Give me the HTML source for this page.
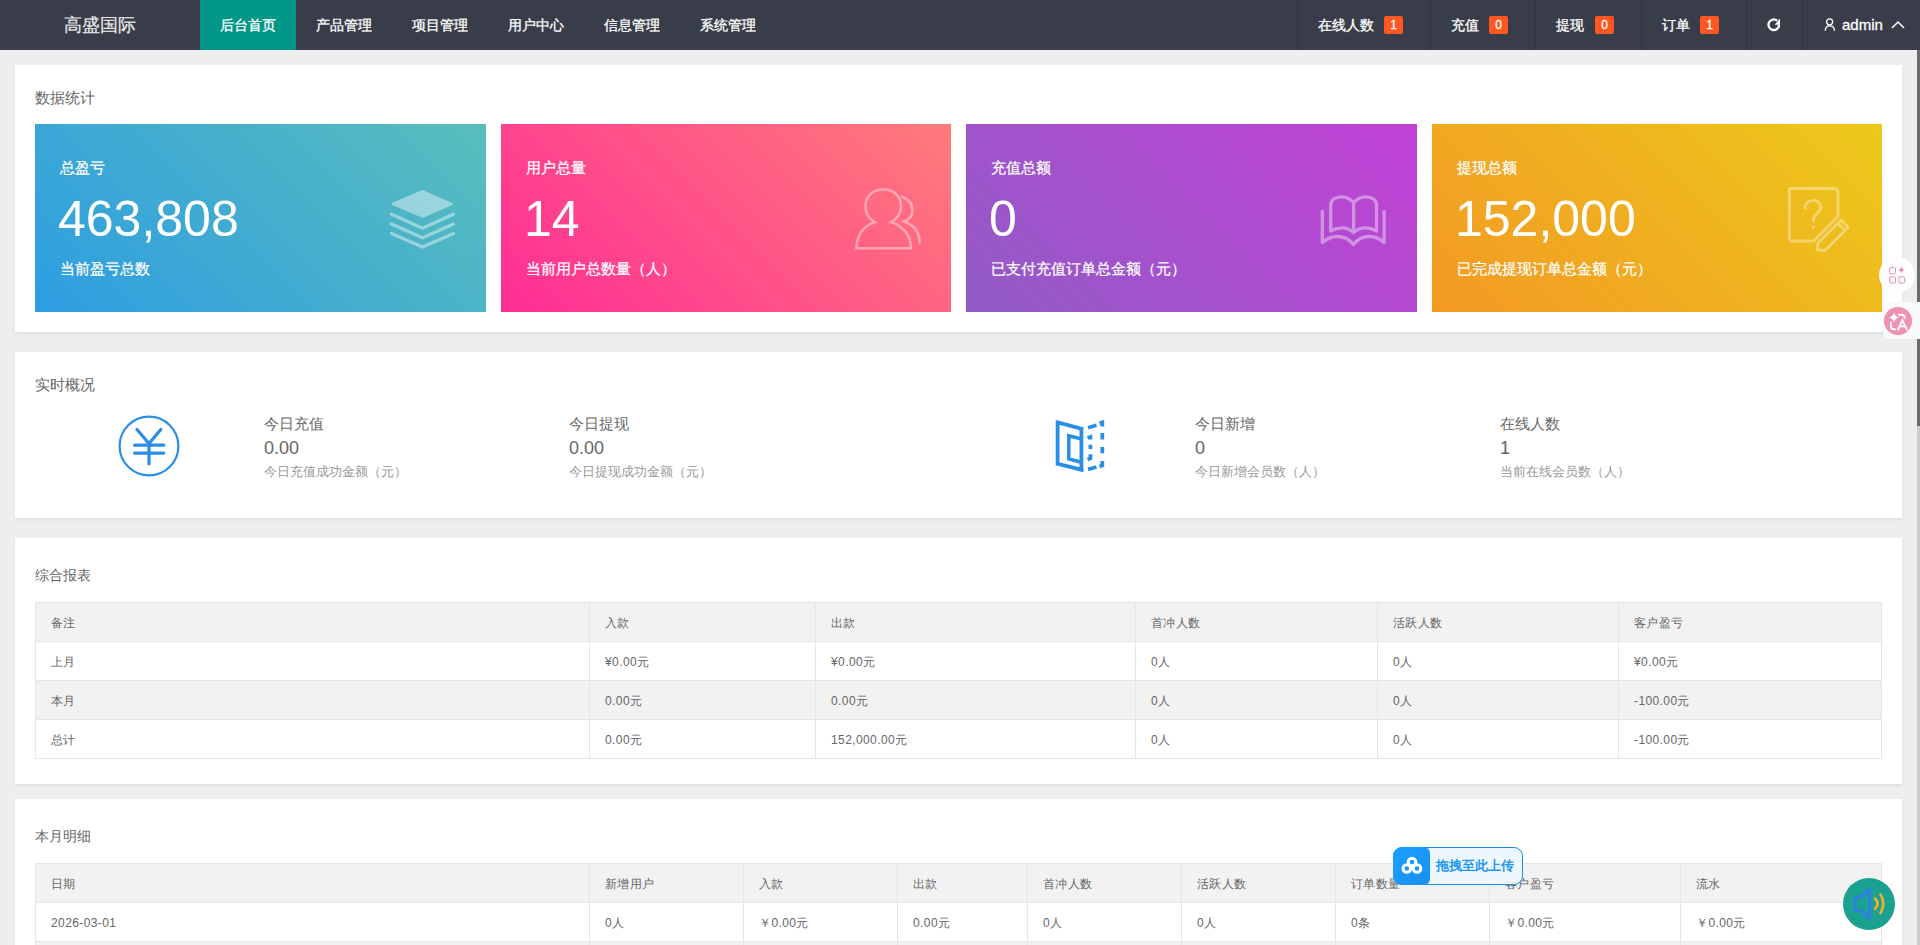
<!DOCTYPE html>
<html><head><meta charset="utf-8">
<style>
*{box-sizing:border-box;margin:0;padding:0}
html,body{width:1920px;height:945px;overflow:hidden}
body{background:#eeeeee;font-family:"Liberation Sans",sans-serif;color:#666;position:relative}
.hdr{position:absolute;left:0;top:0;width:1920px;height:50px;background:#393d49}
.logo{position:absolute;left:0;top:0;width:200px;height:50px;line-height:50px;text-align:center;color:#eaeaea;font-size:18px;-webkit-text-stroke:0.2px #eaeaea}
.nav{position:absolute;top:0;height:50px;line-height:50px;font-size:14px;color:#fff;text-align:center;-webkit-text-stroke:0.3px #fff}
.nav.on{background:#009688;color:#fff}
.sep{position:absolute;top:0;width:1px;height:50px;background:#33363f}
.rt{position:absolute;top:0;height:50px;line-height:50px;font-size:14px;color:#fff;-webkit-text-stroke:0.3px #fff}
.badge{position:absolute;top:16px;width:19px;height:18px;line-height:19px;text-align:center;background:#ff5722;color:#fff;font-size:12px;border-radius:2px;-webkit-text-stroke:0.3px #fff}
.card{position:absolute;left:15px;width:1887px;background:#fff;box-shadow:0 2px 3px 0 rgba(0,0,0,.06)}
.ctitle{position:absolute;left:20px;font-size:15px;color:#666;height:20px;line-height:20px}
.box{position:absolute;top:59px;height:188px;color:#fff}
.box .t{position:absolute;left:25px;top:34px;font-size:15px;line-height:20px;-webkit-text-stroke:0.25px #fff}
.box .n{position:absolute;left:23px;top:70px;font-size:50px;line-height:50px}
.box .s{position:absolute;left:25px;top:135px;font-size:15px;line-height:20px;-webkit-text-stroke:0.25px #fff}
.box svg{position:absolute}
.it{position:absolute}
.it .a{font-size:15px;line-height:20px;color:#666;position:relative;top:1px}
.it .b{font-size:18px;line-height:24px;color:#666;position:relative;top:3px}
.it .c{font-size:13px;line-height:24px;color:#999;position:relative;top:3px}
table{position:absolute;left:20px;border-collapse:collapse;table-layout:fixed;font-size:12px;color:#666}
td,th{border:1px solid #e6e6e6;height:39px;padding:2px 15px 0;letter-spacing:0.4px;text-align:left;font-weight:normal;white-space:nowrap;overflow:hidden}
tr.g td,tr.g th{background:#f2f2f2}
.sb{position:absolute;left:1917px;top:50px;width:3px;height:895px;background:#cdcdcd}
.sbt{position:absolute;left:1917px;top:50px;width:3px;height:376px;background:#6b6b6b}
</style></head><body>
<div class="hdr">
  <div class="logo">高盛国际</div>
  <div class="nav on" style="left:200px;width:96px">后台首页</div>
  <div class="nav" style="left:296px;width:96px">产品管理</div>
  <div class="nav" style="left:392px;width:96px">项目管理</div>
  <div class="nav" style="left:488px;width:96px">用户中心</div>
  <div class="nav" style="left:584px;width:96px">信息管理</div>
  <div class="nav" style="left:680px;width:96px">系统管理</div>

  <div class="sep" style="left:1297px"></div>
  <div class="sep" style="left:1430px"></div>
  <div class="sep" style="left:1535px"></div>
  <div class="sep" style="left:1641px"></div>
  <div class="sep" style="left:1746px"></div>
  <div class="sep" style="left:1802px"></div>
  <div class="rt" style="left:1318px">在线人数</div><div class="badge" style="left:1384px">1</div>
  <div class="rt" style="left:1451px">充值</div><div class="badge" style="left:1489px">0</div>
  <div class="rt" style="left:1556px">提现</div><div class="badge" style="left:1595px">0</div>
  <div class="rt" style="left:1662px">订单</div><div class="badge" style="left:1700px">1</div>
  <svg style="position:absolute;left:1766px;top:16px" width="16" height="16" viewBox="0 0 16 16"><path d="M11.2 4.64A5.3 5.3 0 1 0 13.1 8.9" fill="none" stroke="#fff" stroke-width="2.3"/><path d="M14 2.4L14 8.8L8.7 8.8Z" fill="#fff"/></svg>
  <svg style="position:absolute;left:1823px;top:17px" width="14" height="15" viewBox="0 0 14 15"><circle cx="6.6" cy="4.8" r="3" fill="none" stroke="#fff" stroke-width="1.3"/><path d="M2.3 13.8C2.3 10.6 4.2 8.9 6.7 8.9C9.2 8.9 11.4 10.6 11.4 13.8" fill="none" stroke="#fff" stroke-width="1.3"/></svg>
  <div class="rt" style="left:1842px;font-size:15px">admin</div>
  <svg style="position:absolute;left:1891px;top:20px" width="14" height="10" viewBox="0 0 14 10"><path d="M1 8L7 2L13 8" fill="none" stroke="#fff" stroke-width="1.5"/></svg>
</div>

<!-- card 1 -->
<div class="card" style="top:65px;height:267px">
  <div class="ctitle" style="top:23px">数据统计</div>
  <div class="box" style="left:20px;width:451px;background:linear-gradient(45deg,#2e9de2,#58bebb)">
    <div class="t">总盈亏</div><div class="n">463,808</div><div class="s">当前盈亏总数</div>
    <svg style="left:350px;top:61px;opacity:.42" width="75" height="70" viewBox="385 185 75 70" fill="none" stroke="#fff" stroke-width="3.4" stroke-linecap="round" stroke-linejoin="round">
      <path d="M393.5 203.8L422.8 191.5L451.2 204L422.8 216.4Z" fill="#fff" stroke-width="3"/>
      <path d="M391.5 214.3L422.5 228.3L453.5 214.3M391.5 224L422.5 237.8L453.5 224M391.5 233.5L422.5 247L453.5 233.5"/>
    </svg>
  </div>
  <div class="box" style="left:486px;width:450px;background:linear-gradient(45deg,#ff2d95,#ff7c7b)">
    <div class="t">用户总量</div><div class="n">14</div><div class="s">当前用户总数量（人）</div>
    <svg style="left:349px;top:60px;opacity:.4" width="80" height="75" viewBox="850 184 80 75" fill="none" stroke="#fff" stroke-width="2.6" stroke-linecap="round" stroke-linejoin="miter">
      <path d="M875 222.3C868 218.5 865.5 212 865.5 206C865.5 196 873 189.5 883.3 189.5C893.5 189.5 901 196 901 206C901 212 898 218.5 891 222.3C903.5 226 911 236 911 248.3L856.5 248.3C856.5 236 863 226 875 222.3Z"/>
      <path d="M902.5 197C909 199.5 912.5 204.5 912.5 210.5C912.5 215.5 909.5 219.5 904 221.5C914 225 919.5 232 919.5 242.5"/>
    </svg>
  </div>
  <div class="box" style="left:951px;width:451px;background:linear-gradient(45deg,#915bc6,#c242d6)">
    <div class="t">充值总额</div><div class="n">0</div><div class="s">已支付充值订单总金额（元）</div>
    <svg style="left:349px;top:61px;opacity:.4" width="75" height="70" viewBox="1315 185 75 70" fill="none" stroke="#fff" stroke-width="3.3" stroke-linecap="round" stroke-linejoin="round">
      <path d="M1353.6 202.5C1350 198.5 1346 196.8 1341.5 196.8C1335 196.8 1330.7 200 1330.7 205L1330.7 231C1335 228.5 1339 227.8 1342 227.8C1346.5 227.8 1350.5 229.5 1353.6 232.5C1356.7 229.5 1360.7 227.8 1365.2 227.8C1368.2 227.8 1372.2 228.5 1376.5 231L1376.5 205C1376.5 200 1372.2 196.8 1365.7 196.8C1361.2 196.8 1357.2 198.5 1353.6 202.5ZM1353.6 202.5L1353.6 232.5"/>
      <path d="M1322.3 211.3L1322.3 242.5C1327 238.5 1332 236.5 1337.5 236.5C1344 236.5 1349.5 239.5 1353.4 244.5C1357.3 239.5 1362.8 236.5 1369.3 236.5C1374.8 236.5 1379.8 238.5 1384.1 242.5L1384.1 211.3"/>
    </svg>
  </div>
  <div class="box" style="left:1417px;width:450px;background:linear-gradient(45deg,#f39924,#ecc91b)">
    <div class="t">提现总额</div><div class="n">152,000</div><div class="s">已完成提现订单总金额（元）</div>
    <svg style="left:348px;top:56px;opacity:.36" width="75" height="75" viewBox="1780 180 75 75" fill="none" stroke="#fff" stroke-width="2.8" stroke-linecap="round" stroke-linejoin="round">
      <path d="M1838 216.4L1838 191L1835.5 188.5L1789.4 188.5L1789.4 238.5Q1789.4 241 1792 241L1813.7 241L1838 216.4"/>
      <path d="M1805.2 208C1805 203.5 1808.5 200.3 1813 200.3C1817.5 200.3 1820.8 203.3 1820.8 207.3C1820.8 212 1813.5 214 1813.5 219.5L1813.5 221"/>
      <circle cx="1813.3" cy="227.2" r="1.6" fill="#fff" stroke="none"/>
      <path d="M1841.1 220L1848.3 227.2L1825 250.5L1817.3 249.6L1818 243Z"/>
      <path d="M1837.8 223.3L1845 230.5"/>
    </svg>
  </div>
</div>

<!-- card 2 -->
<div class="card" style="top:352px;height:166px">
  <div class="ctitle" style="top:23px">实时概况</div>
  <svg style="position:absolute;left:103px;top:63px" width="62" height="62" viewBox="0 0 62 62" fill="none" stroke="#2b8ee6" stroke-linecap="round">
    <circle cx="31" cy="31" r="29.4" stroke-width="2.2"/>
    <path d="M19 14.5L31 28.5L42.8 14.5M16.6 30.2L45.8 30.2M16.6 38.1L45.8 38.1M31 28.5L31 48.8" stroke-width="3.2"/>
  </svg>
  <div class="it" style="left:249px;top:61px"><div class="a">今日充值</div><div class="b">0.00</div><div class="c">今日充值成功金额（元）</div></div>
  <div class="it" style="left:554px;top:61px"><div class="a">今日提现</div><div class="b">0.00</div><div class="c">今日提现成功金额（元）</div></div>
  <svg style="position:absolute;left:1035px;top:63px" width="60" height="62" viewBox="1050 415 60 62" fill="none" stroke="#2b8ee6" stroke-width="3.8" stroke-linejoin="miter">
    <path d="M1057.6 422.4L1081.4 428.6L1081.4 469.7L1057.6 463.8Z"/>
    <path d="M1082.5 439.3L1068.8 435.7L1068.8 459L1082.5 462.5" stroke-width="3.5"/>
    <path d="M1081.4 428.6L1083.3 428.6M1081.4 469.7L1083.3 470.5" stroke-width="3"/>
    <path d="M1088 427.8L1096.5 425.3M1099.5 423.3L1102.3 422.4L1102.3 426.5M1102.3 433L1102.3 439.5M1102.3 447L1102.3 453.3M1102.3 461L1102.3 465.5L1099.5 466.5M1088 469.3L1096.5 467M1087.5 438L1090.4 437L1090.4 439.5M1090.4 444.8L1090.4 449M1090.4 454.3L1090.4 458.5L1087.5 459.5"/>
  </svg>
  <div class="it" style="left:1180px;top:61px"><div class="a">今日新增</div><div class="b">0</div><div class="c">今日新增会员数（人）</div></div>
  <div class="it" style="left:1485px;top:61px"><div class="a">在线人数</div><div class="b">1</div><div class="c">当前在线会员数（人）</div></div>
</div>

<!-- card 3 -->
<div class="card" style="top:538px;height:246px">
  <div class="ctitle" style="top:27px;font-size:14px">综合报表</div>
  <table style="top:64px;width:1847px">
    <colgroup><col style="width:554px"><col style="width:226px"><col style="width:320px"><col style="width:242px"><col style="width:241px"><col style="width:263px"></colgroup>
    <tr class="g"><th>备注</th><th>入款</th><th>出款</th><th>首冲人数</th><th>活跃人数</th><th>客户盈亏</th></tr>
    <tr><td>上月</td><td>¥0.00元</td><td>¥0.00元</td><td>0人</td><td>0人</td><td>¥0.00元</td></tr>
    <tr class="g"><td>本月</td><td>0.00元</td><td>0.00元</td><td>0人</td><td>0人</td><td>-100.00元</td></tr>
    <tr><td>总计</td><td>0.00元</td><td>152,000.00元</td><td>0人</td><td>0人</td><td>-100.00元</td></tr>
  </table>
</div>

<!-- card 4 -->
<div class="card" style="top:799px;height:300px">
  <div class="ctitle" style="top:27px;font-size:14px">本月明细</div>
  <table style="top:64px;width:1847px">
    <colgroup><col style="width:554px"><col style="width:154px"><col style="width:154px"><col style="width:130px"><col style="width:154px"><col style="width:154px"><col style="width:154px"><col style="width:191px"><col style="width:201px"></colgroup>
    <tr class="g"><th>日期</th><th>新增用户</th><th>入款</th><th>出款</th><th>首冲人数</th><th>活跃人数</th><th>订单数量</th><th>客户盈亏</th><th>流水</th></tr>
    <tr><td>2026-03-01</td><td>0人</td><td>￥0.00元</td><td>0.00元</td><td>0人</td><td>0人</td><td>0条</td><td>￥0.00元</td><td>￥0.00元</td></tr>
    <tr class="g"><td>2026-03-02</td><td>0人</td><td>￥0.00元</td><td>0.00元</td><td>0人</td><td>0人</td><td>0条</td><td>￥0.00元</td><td>￥0.00元</td></tr>
  </table>
</div>

<!-- scrollbar -->
<div class="sb"></div><div class="sbt"></div>

<!-- floating widgets -->
<div style="position:absolute;left:1879px;top:257px;width:36px;height:36px;border-radius:50%;background:rgba(253,253,253,.95);box-shadow:0 0 3px rgba(0,0,0,.04)"></div>
<svg style="position:absolute;left:1887px;top:265px" width="20" height="20" viewBox="0 0 20 20" fill="none" stroke="#e48fb1" stroke-width="1">
  <rect x="2.5" y="2.7" width="6" height="6.2" rx="1.2"/><rect x="2.5" y="11.8" width="6" height="6.2" rx="1.2"/><rect x="11.8" y="11.8" width="6" height="6.2" rx="1.2"/>
  <path d="M14.4 1.6Q14.9 4.4 17.7 4.9Q14.9 5.4 14.4 8.2Q13.9 5.4 11.1 4.9Q13.9 4.4 14.4 1.6Z" fill="#e88fb3" stroke="none"/>
</svg>
<div style="position:absolute;left:1883px;top:302px;width:37px;height:37px;border-radius:8px 0 0 8px;background:#fafafa"></div>
<div style="position:absolute;left:1884px;top:307px;width:28px;height:28px;border-radius:50%;background:#ee92b2"></div>
<svg style="position:absolute;left:1884px;top:307px" width="28" height="28" viewBox="0 0 28 28" fill="none" stroke="#fff" stroke-width="1.9" stroke-linecap="round">
  <path d="M10 5.5Q10.9 9.6 15 10.5Q10.9 11.4 10 15.5Q9.1 11.4 5 10.5Q9.1 9.6 10 5.5Z" fill="#fff" stroke="none"/>
  <path d="M15 7.8L17.5 7.8Q20.8 7.8 20.8 11"/><path d="M7 15.5L7 19.5Q7 22.3 9.8 22.3L11 22.3"/>
  <path d="M14 22.6L18.4 13.2L22.8 22.6M15.6 19.4L21.2 19.4"/>
</svg>

<div style="position:absolute;left:1393px;top:847px;width:130px;height:38px;border:1.5px solid #1b8de0;border-radius:9px;background:#eef7fd"></div>
<div style="position:absolute;left:1393px;top:847px;width:37px;height:38px;border-radius:9px 6px 6px 9px;background:linear-gradient(135deg,#1aa0ff,#1890f0)"></div>
<svg style="position:absolute;left:1401px;top:855px" width="22" height="22" viewBox="0 0 22 22" fill="none" stroke="#fff" stroke-width="3">
  <circle cx="11" cy="7" r="3.8"/><circle cx="5.8" cy="13.5" r="3.8"/><circle cx="16" cy="13.5" r="3.8"/>
</svg>
<div style="position:absolute;left:1436px;top:856px;font-size:13px;line-height:20px;font-weight:bold;color:#1b98f0">拖拽至此上传</div>

<div style="position:absolute;left:1843px;top:878px;width:52px;height:52px;border-radius:50%;background:#1aa18f"></div>
<svg style="position:absolute;left:1843px;top:878px" width="52" height="52" viewBox="0 0 52 52" fill="none" stroke-linecap="round" stroke-linejoin="round">
  <path d="M26.5 11L26.5 40.5L19 33.5L12.5 32.5L12.5 20L19 18Z" stroke="#2f7cf0" stroke-width="2.6"/>
  <path d="M32 20.5Q37 25.7 32 30.8" stroke="#f0b12a" stroke-width="2.6"/>
  <path d="M37.5 16.4Q43 25.8 37.5 35.2" stroke="#f0b12a" stroke-width="2.6"/>
</svg>
</body></html>
